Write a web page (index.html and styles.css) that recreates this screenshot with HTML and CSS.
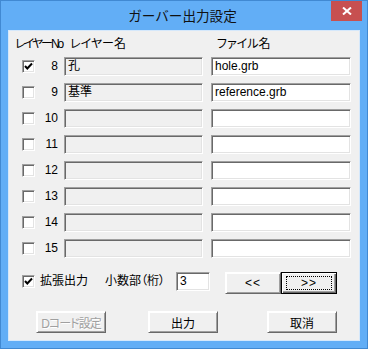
FILE: index.html
```html
<!DOCTYPE html>
<html lang="ja">
<head>
<meta charset="utf-8">
<title>ガーバー出力設定</title>
<link rel="stylesheet" href="styles.css">
</head>
<body>
<div class="window">
  <div class="titlebar">
    <span></span>
    <span class="title">ガーバー出力設定</span>
    <span class="close"><svg width="10" height="8" viewBox="0 0 10 8"><path d="M1 0.5 L9 7.5 M9 0.5 L1 7.5" stroke="#fff" stroke-width="2"/></svg></span>
  </div>
  <div class="client">
    <div class="header">
      <span class="h-no">レイヤーNo</span>
      <span class="h-name">レイヤー名</span>
      <span class="h-file">ファイル名</span>
    </div>
    <div class="rows">
      <span class="cb"><svg width="9" height="9" viewBox="0 0 9 9"><path d="M1 4 L3.3 6.5 L8 1.5" fill="none" stroke="#000" stroke-width="2"/></svg></span>
      <span class="num">8</span>
      <div class="field ro">孔</div>
      <div class="field">hole.grb</div>

      <span class="cb"></span>
      <span class="num">9</span>
      <div class="field ro">基準</div>
      <div class="field">reference.grb</div>

      <span class="cb"></span>
      <span class="num">10</span>
      <div class="field ro"></div>
      <div class="field"></div>

      <span class="cb"></span>
      <span class="num">11</span>
      <div class="field ro"></div>
      <div class="field"></div>

      <span class="cb"></span>
      <span class="num">12</span>
      <div class="field ro"></div>
      <div class="field"></div>

      <span class="cb"></span>
      <span class="num">13</span>
      <div class="field ro"></div>
      <div class="field"></div>

      <span class="cb"></span>
      <span class="num">14</span>
      <div class="field ro"></div>
      <div class="field"></div>

      <span class="cb"></span>
      <span class="num">15</span>
      <div class="field ro"></div>
      <div class="field"></div>
    </div>
    <div class="options">
      <span class="cb"><svg width="9" height="9" viewBox="0 0 9 9"><path d="M1 4 L3.3 6.5 L8 1.5" fill="none" stroke="#000" stroke-width="2"/></svg></span>
      <span class="opt-label">拡張出力</span>
      <span class="opt-label2">小数部（桁）</span>
      <div class="field small">3</div>
      <button class="btn nav">&lt;&lt;</button>
      <button class="btn nav default"><span class="focus">&gt;&gt;</span></button>
    </div>
    <div class="actions">
      <button class="btn act disabled">Dコード設定</button>
      <button class="btn act out">出力</button>
      <button class="btn act cancel">取消</button>
    </div>
  </div>
</div>
</body>
</html>
```

FILE: styles.css
```css
* { box-sizing: border-box; }
html, body { margin: 0; padding: 0; }
body {
  width: 368px;
  height: 349px;
  font-family: "Liberation Sans", "Noto Sans CJK JP", sans-serif;
  font-size: 12px;
  font-feature-settings: "palt";
  color: #000;
  background: #fff;
}
.window {
  width: 368px;
  height: 349px;
  border: 1px solid #4189d2;
  background: #62aef6;
  padding: 0 7px 7px;
  display: flex;
  flex-direction: column;
}
.titlebar {
  height: 29px;
  margin: 0 -7px;
  display: grid;
  grid-template-columns: 1fr auto 1fr;
  align-items: start;
}
.title {
  font-family: "Noto Sans CJK JP", sans-serif;
  font-feature-settings: normal;
  font-size: 13.6px;
  line-height: 29px;
  color: #111;
  margin-left: -3px;
}
.close {
  justify-self: end;
  margin-right: 5px;
  width: 31px;
  height: 20px;
  background: #c75050;
  display: flex;
  align-items: center;
  justify-content: center;
}
.close svg { display: block; }
.client {
  flex: 1;
  background: #f0f0f0;
  border: 1px solid #d5e8fb;
  padding: 6px 0 0 6px;
}
.header {
  display: flex;
  height: 14px;
  line-height: 14px;
  white-space: nowrap;
}
.h-no { width: 55px; letter-spacing: -2px; }
.h-name { width: 147px; }
.rows {
  margin-top: 6px;
  margin-left: 7px;
  display: grid;
  grid-template-columns: 13px 29px 147px 140px;
  grid-auto-rows: 19px;
  row-gap: 7px;
  align-items: center;
}
.cb {
  width: 13px;
  height: 13px;
  background: #fff;
  border-top: 1px solid #a0a0a0;
  border-left: 1px solid #a0a0a0;
  border-right: 1px solid #fff;
  border-bottom: 1px solid #fff;
  box-shadow: inset 1px 1px 0 #696969, inset -1px -1px 0 #e3e3e3;
  display: flex;
  align-items: center;
  justify-content: center;
}
.cb svg { display: block; }
.num {
  text-align: right;
  padding-right: 6px;
  line-height: 19px;
}
.field {
  height: 19px;
  background: #fff;
  border-top: 1px solid #a0a0a0;
  border-left: 1px solid #a0a0a0;
  border-right: 1px solid #fff;
  border-bottom: 1px solid #fff;
  box-shadow: inset 1px 1px 0 #696969, inset -1px -1px 0 #e3e3e3;
  padding: 0 0 0 3px;
  line-height: 17px;
  white-space: nowrap;
  overflow: hidden;
}
.rows .field { width: 140px; }
.rows .field.ro { width: 139px; background: #f0f0f0; }
.options {
  margin-top: 14px;
  margin-left: 7px;
  display: flex;
  align-items: flex-start;
  height: 22px;
}
.options .cb { margin-top: 3px; }
.opt-label { width: 70px; padding-left: 5px; line-height: 19px; }
.opt-label2 { width: 71px; line-height: 19px; }
.field.small { width: 34px; }
.btn {
  font: inherit;
  font-size: 12px;
  color: #000;
  background: #f0f0f0;
  border-top: 1px solid #fff;
  border-left: 1px solid #fff;
  border-right: 1px solid #696969;
  border-bottom: 1px solid #696969;
  box-shadow: inset 1px 1px 0 #fff, inset -1px -1px 0 #a0a0a0;
  height: 22px;
  padding: 0;
  margin: 0;
  display: flex;
  align-items: center;
  justify-content: center;
}
.nav { width: 56px; letter-spacing: 1px; }
.nav:first-of-type { margin-left: 15px; }
.nav.default {
  border: 1px solid #000;
  box-shadow: inset 1px 1px 0 #fff, inset -1px -1px 0 #696969, inset -2px -2px 0 #a0a0a0;
}
.focus {
  width: 46px;
  height: 14px;
  border: 1px dotted #000;
  display: flex;
  align-items: center;
  justify-content: center;
  line-height: 12px;
}
.actions {
  margin-top: 17px;
  margin-left: 21px;
  display: flex;
}
.act { width: 70px; }
.act.out { margin-left: 42px; }
.act.cancel { margin-left: 49px; }
.disabled {
  color: #a0a0a0;
  text-shadow: 1px 1px 0 #fff;
  letter-spacing: -1px;
}
```
